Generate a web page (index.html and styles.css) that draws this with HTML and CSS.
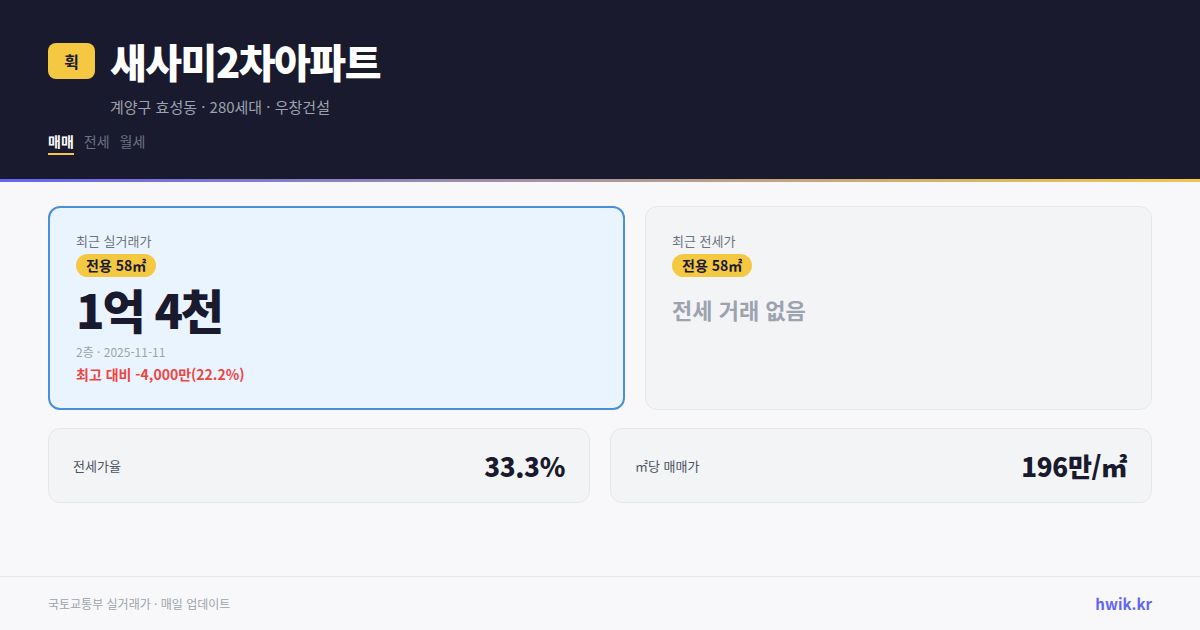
FILE: index.html
```html
<!DOCTYPE html>
<html lang="ko">
<head>
<meta charset="utf-8">
<link rel="stylesheet" href="styles.css">
</head>
<body>
<div class="page">
  <header class="header">
    <div class="title-row">
      <div class="logo">휙</div>
      <h1 class="title">새사미2차아파트</h1>
    </div>
    <div class="subtitle">계양구 효성동 · 280세대 · 우창건설</div>
    <nav class="tabs">
      <span class="tab active">매매</span>
      <span class="tab">전세</span>
      <span class="tab">월세</span>
    </nav>
  </header>
  <div class="accent"></div>
  <main class="main">
    <div class="top-row">
      <section class="card card-primary">
        <div class="card-label">최근 실거래가</div>
        <span class="pill">전용 58㎡</span>
        <div class="price">1억 4천</div>
        <div class="meta">2층 · 2025-11-11</div>
        <div class="diff">최고 대비 -4,000만(22.2%)</div>
      </section>
      <section class="card card-muted">
        <div class="card-label">최근 전세가</div>
        <span class="pill">전용 58㎡</span>
        <div class="empty">전세 거래 없음</div>
      </section>
    </div>
    <div class="bottom-row">
      <section class="stat">
        <span class="stat-label">전세가율</span>
        <span class="stat-value">33.3%</span>
      </section>
      <section class="stat">
        <span class="stat-label">㎡당 매매가</span>
        <span class="stat-value">196만/㎡</span>
      </section>
    </div>
  </main>
  <footer class="footer">
    <span class="source">국토교통부 실거래가 · 매일 업데이트</span>
    <span class="brand">hwik.kr</span>
  </footer>
</div>
</body>
</html>
```

FILE: styles.css
```css
* { box-sizing: border-box; margin: 0; padding: 0; }
html, body { width: 1200px; height: 630px; overflow: hidden; }
body {
  font-family: "Noto Sans CJK KR", "Noto Sans", sans-serif;
  background: #f8f8fa;
  color: #1a1a2e;
}
.page { display: flex; flex-direction: column; height: 630px; }
.header {
  background: #1a1a2e;
  height: 179px;
  padding: 39px 48px 0;
}
.title-row { display: flex; align-items: center; gap: 15px; }
.logo {
  width: 47px; height: 36px;
  background: #f5c842;
  border-radius: 8px;
  display: flex; align-items: center; justify-content: center;
  font-size: 16px; font-weight: 700; color: #1a1a2e;
}
.title {
  font-size: 40px; font-weight: 900; color: #ffffff;
  line-height: 44px; letter-spacing: -1.5px;
}
.subtitle {
  margin: 14px 0 0 62px;
  font-size: 15px; color: #9ca3af; line-height: 20px;
}
.tabs { display: flex; gap: 10px; margin-top: 14px; }
.tab {
  font-size: 14px; color: #6b7280; line-height: 20px;
  padding-bottom: 2px;
}
.tab.active {
  color: #ffffff; font-weight: 700;
  border-bottom: 2px solid #f5c842;
}
.accent {
  height: 3px;
  background: linear-gradient(90deg, #6366f1, #f5c842);
}
.main { flex: 1; padding: 24px 48px 0; }
.top-row {
  display: grid;
  grid-template-columns: 577fr 507fr;
  gap: 20px;
}
.card {
  height: 204px;
  border-radius: 12px;
  padding: 24px 26px;
}
.card-primary { background: #eaf4ff; border: 2px solid #4a90d9; }
.card-muted { background: #f3f4f6; border: 1px solid #e5e7eb; padding: 25px 26px; }
.card-label { font-size: 13px; color: #6b7280; line-height: 18px; }
.pill {
  display: inline-block;
  margin-top: 4px;
  background: #f5c842; color: #1a1a2e;
  font-size: 14px; font-weight: 700;
  padding: 0 10px; border-radius: 12px; line-height: 23px;
}
.price {
  font-size: 47px; font-weight: 900; line-height: 60px;
  letter-spacing: -2.2px; margin-top: 2px; margin-bottom: -1px;
}
.meta { font-size: 12px; color: #9ca3af; line-height: 16px; margin-top: 6px; }
.diff { font-size: 14px; font-weight: 700; color: #ef4444; line-height: 20px; margin-top: 4px; }
.empty {
  font-size: 22px; font-weight: 700; color: #9ca3af;
  margin-top: 17px; line-height: 30px;
}
.bottom-row {
  display: grid; grid-template-columns: 1fr 1fr; gap: 20px;
  margin-top: 18px;
}
.stat {
  height: 75px;
  background: #f3f4f6; border: 1px solid #e5e7eb; border-radius: 12px;
  padding: 0 24px;
  display: flex; align-items: center; justify-content: space-between;
}
.stat-label { font-size: 13px; color: #4b5563; }
.stat-value { font-size: 26px; font-weight: 900; color: #1a1a2e; letter-spacing: -0.3px; }
.footer {
  height: 54px;
  border-top: 1px solid #e5e7eb;
  padding: 0 48px;
  display: flex; align-items: center; justify-content: space-between;
}
.source { font-size: 12px; color: #9ca3af; }
.brand { font-size: 15px; font-weight: 700; color: #6366f1; }
```
